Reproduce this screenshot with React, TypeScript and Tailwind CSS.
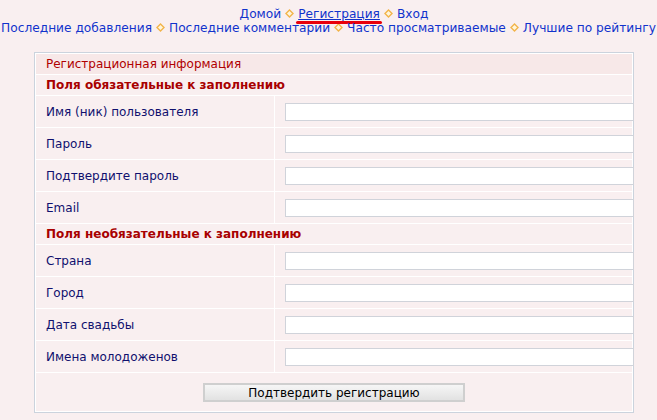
import React from "react";

const Diamond: React.FC = () => (
  <svg width="9" height="9" viewBox="0 0 9 9" className="inline-block mx-[4px] align-[0px]">
    <path d="M4.5 1 L8 4.5 L4.5 8 L1 4.5 Z" fill="#fff6dc" stroke="#f2b44a" strokeWidth="1.4" />
  </svg>
);

const NavLink: React.FC<{ children: React.ReactNode; active?: boolean }> = ({ children, active }) => (
  <span className="relative">
    <a href="#" className={active ? "text-[#1133cc] underline" : "text-[#1133cc] no-underline"}>
      {children}
    </a>
    {active && (
      <span className="absolute left-[-2px] right-[-2px] top-[14px] h-[3px] rounded-full bg-[#e8000b]" />
    )}
  </span>
);

const required = ["Имя (ник) пользователя", "Пароль", "Подтвердите пароль", "Email"];
const optional = ["Страна", "Город", "Дата свадьбы", "Имена молодоженов"];

const FieldRow: React.FC<{ label: string }> = ({ label }) => (
  <tr>
    <td className="h-[31px] bg-[#f9eff0] p-0 pl-[10px] text-[#10106e]">{label}</td>
    <td className="h-[31px] bg-[#f9eff0] p-0 pl-[10px]">
      <input
        type="text"
        className="relative block h-[18px] w-[349px] border border-[#d0d3da] bg-white outline-none"
      />
    </td>
  </tr>
);

const App: React.FC = () => {
  return (
    <div className="min-h-[420px] w-[657px] overflow-hidden bg-[#f9eff0] font-['DejaVu_Sans',sans-serif]">
      <div className="pt-[7px] text-center text-[12.2px] leading-[14px] whitespace-nowrap">
        <div className="pl-[11px]">
          <NavLink>Домой</NavLink>
          <Diamond />
          <NavLink active>Регистрация</NavLink>
          <Diamond />
          <NavLink>Вход</NavLink>
        </div>
        <div className="ml-[-8px] mr-[-8px]">
          <NavLink>Последние добавления</NavLink>
          <Diamond />
          <NavLink>Последние комментарии</NavLink>
          <Diamond />
          <NavLink>Часто просматриваемые</NavLink>
          <Diamond />
          <NavLink>Лучшие по рейтингу</NavLink>
        </div>
      </div>

      <table className="ml-[34px] mt-[17px] w-[600px] table-fixed border border-[#cbd3dd] border-separate border-spacing-[1px] bg-white text-[12px] leading-[14px]">
        <colgroup>
          <col className="w-[238px]" />
          <col />
        </colgroup>
        <tbody>
          <tr>
            <td colSpan={2} className="h-[20px] bg-[#f7e8e8] p-0 pl-[10px] text-[#b00000]">
              Регистрационная информация
            </td>
          </tr>
          <tr>
            <td colSpan={2} className="h-[20px] bg-[#f9eff0] p-0 pl-[10px] font-bold text-[#a80000]">
              Поля обязательные к заполнению
            </td>
          </tr>
          {required.map((l) => (
            <FieldRow key={l} label={l} />
          ))}
          <tr>
            <td colSpan={2} className="h-[20px] bg-[#f9eff0] p-0 pl-[10px] font-bold text-[#a80000]">
              Поля необязательные к заполнению
            </td>
          </tr>
          {optional.map((l) => (
            <FieldRow key={l} label={l} />
          ))}
          <tr>
            <td colSpan={2} className="h-[38px] bg-[#f9eff0] p-0">
              <div className="flex justify-center pt-[1px]">
                <button className="h-[19px] w-[262px] border-2 border-[#cfcfcf] bg-gradient-to-b from-[#f6f6f6] to-[#e2e2e2] text-[12px] leading-[14px] text-black">
                  Подтвердить регистрацию
                </button>
              </div>
            </td>
          </tr>
        </tbody>
      </table>
    </div>
  );
};

export default App;
